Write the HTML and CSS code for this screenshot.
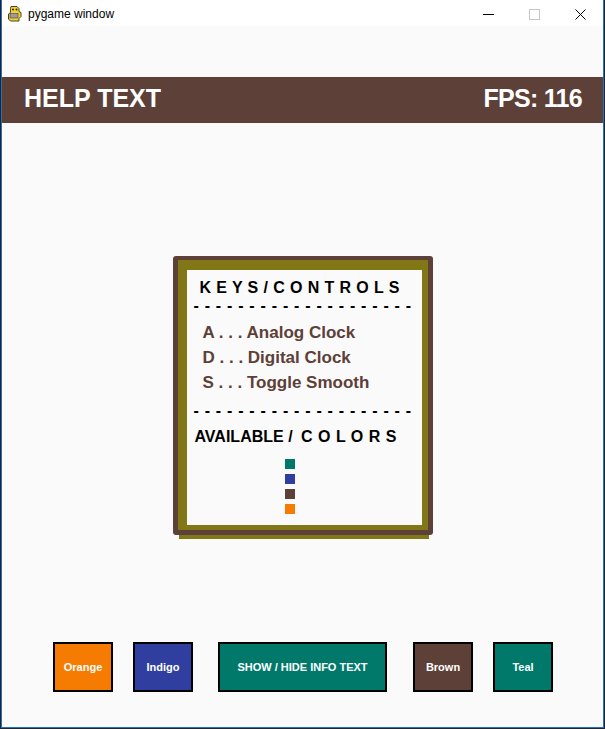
FILE: index.html
```html
<!DOCTYPE html>
<html>
<head>
<meta charset="utf-8">
<title>pygame window</title>
<link rel="stylesheet" href="styles.css">
</head>
<body>
<div class="window">
  <div class="titlebar">
    <svg class="app-icon" width="16" height="17" viewBox="0 0 16 17">
      <path d="M4 1.5h6l2 2v3l2 1v4l-2 2v2.5H3.5l-2-2V9l2-1.5V3.5z" fill="#f2d22e" stroke="#4a4320" stroke-width="1"/>
      <rect x="3" y="8.5" width="8" height="4.5" fill="#9c9c9c" stroke="#444" stroke-width="0.6"/>
      <circle cx="6" cy="4.5" r="1" fill="#222"/>
      <circle cx="9.5" cy="4.5" r="1" fill="#222"/>
    </svg>
    <span class="title">pygame window</span>
    <div class="controls">
      <div class="ctl"><svg width="11" height="11" viewBox="0 0 11 11"><path d="M0 5.5h11" stroke="#000" stroke-width="1"/></svg></div>
      <div class="ctl"><svg width="11" height="11" viewBox="0 0 11 11"><rect x="0.5" y="0.5" width="10" height="10" fill="none" stroke="#c8c8c8" stroke-width="1"/></svg></div>
      <div class="ctl"><svg width="11" height="11" viewBox="0 0 11 11"><path d="M0.5 0.5l10 10M10.5 0.5l-10 10" stroke="#000" stroke-width="1"/></svg></div>
    </div>
  </div>
  <div class="content">
    <div class="header">
      <span>HELP TEXT</span>
      <span class="fps">FPS: 116</span>
    </div>
    <div class="stage">
      <div class="frame">
        <div class="panel">
          <div class="keys">K E Y S / C O N T R O L S</div>
          <div class="dashes">- - - - - - - - - - - - - - - - - - - -</div>
          <ul class="keylist"><li>A . . . Analog Clock</li><li>D . . . Digital Clock</li><li>S . . . Toggle Smooth</li></ul>
          <div class="dashes dashes-2">- - - - - - - - - - - - - - - - - - - -</div>
          <div class="avail">AVAILABLE / <span class="spaced">C O L O R S</span></div>
          <div class="swatches">
            <span class="sw teal"></span>
            <span class="sw indigo"></span>
            <span class="sw brown"></span>
            <span class="sw orange"></span>
          </div>
        </div>
      </div>
    </div>
    <div class="buttons">
      <div class="btn orange">Orange</div>
      <div class="btn indigo gap-20">Indigo</div>
      <div class="btn teal wide gap-25">SHOW / HIDE INFO TEXT</div>
      <div class="btn brown gap-26">Brown</div>
      <div class="btn teal gap-20">Teal</div>
    </div>
  </div>
</div>
</body>
</html>
```

FILE: styles.css
```css
* { box-sizing: border-box; }

html, body {
  margin: 0;
  padding: 0;
  background: #1d2632;
}

.window {
  margin-left: 1px;
  width: 603px;
  height: 728px;
  border: 1px solid #2d6fb7;
  border-top: none;
  display: flex;
  flex-direction: column;
  background: #fafafa;
}

.titlebar {
  height: 26px;
  flex: none;
  background: #ffffff;
  display: flex;
  align-items: center;
  font-family: "Liberation Sans", Arial, sans-serif;
  font-size: 12px;
  color: #000;
}

.app-icon {
  margin-left: 5px;
  margin-top: 1px;
  flex: none;
}

.title {
  margin-left: 5px;
  margin-top: 1px;
}

.controls {
  margin-left: auto;
  display: flex;
  height: 100%;
}

.ctl {
  width: 46px;
  height: 100%;
  display: flex;
  align-items: center;
  justify-content: center;
  padding-top: 3px;
}

.content {
  flex: 1;
  background: #fafafa;
  display: flex;
  flex-direction: column;
  font-family: "Liberation Sans", Arial, sans-serif;
}

.header {
  margin-top: 51px;
  height: 46px;
  background: #5d4037;
  color: #ffffff;
  display: flex;
  justify-content: space-between;
  padding: 9px 21px 0 22px;
  font-weight: bold;
  font-size: 25px;
  line-height: 25px;
}

.fps {
  letter-spacing: -0.7px;
}

.stage {
  margin-top: 133px;
  display: flex;
  justify-content: center;
}

.frame {
  background: #5d4037;
  border-radius: 3px;
  padding: 4px 5px 5px 5px;
  box-shadow: 1px 9px 0 -5px #827717;
}

.panel {
  width: 250px;
  height: 270px;
  background: #fafafa;
  border-style: solid;
  border-color: #827717;
  border-width: 10px 6px 5px 9px;
  font-weight: bold;
  font-size: 16px;
  line-height: 18px;
  color: #000;
}

.keys {
  margin-top: 9px;
  padding-left: 13px;
  letter-spacing: 0.4px;
  white-space: pre;
}

.dashes {
  padding-left: 7px;
  letter-spacing: 0.7px;
  white-space: pre;
}

.keylist {
  list-style: none;
  margin: 5px 0 0 0;
  padding: 0 0 0 16px;
  color: #5d4037;
  font-size: 17px;
  line-height: 25px;
}

.keylist li {
  white-space: pre;
}

.dashes-2 {
  margin-top: 7px;
}

.avail {
  margin-top: 8px;
  padding-left: 8px;
  white-space: pre;
}

.spaced {
  margin-left: 4px;
  letter-spacing: 0.5px;
}

.swatches {
  margin-top: 13px;
  padding-left: 98px;
  display: flex;
  flex-direction: column;
  gap: 5px;
}

.sw {
  display: block;
  width: 10px;
  height: 10px;
}

.teal { background: #00796b; }
.indigo { background: #303f9f; }
.brown { background: #5d4037; }
.orange { background: #f57c00; }

.buttons {
  margin-top: 107px;
  padding-left: 51px;
  display: flex;
}

.btn {
  width: 60px;
  height: 50px;
  border: 2px solid #000;
  display: flex;
  align-items: center;
  justify-content: center;
  color: #ffffff;
  font-weight: bold;
  font-size: 11px;
  white-space: nowrap;
}

.btn.wide { width: 169px; }

.gap-20 { margin-left: 20px; }
.gap-25 { margin-left: 25px; }
.gap-26 { margin-left: 26px; }
```
